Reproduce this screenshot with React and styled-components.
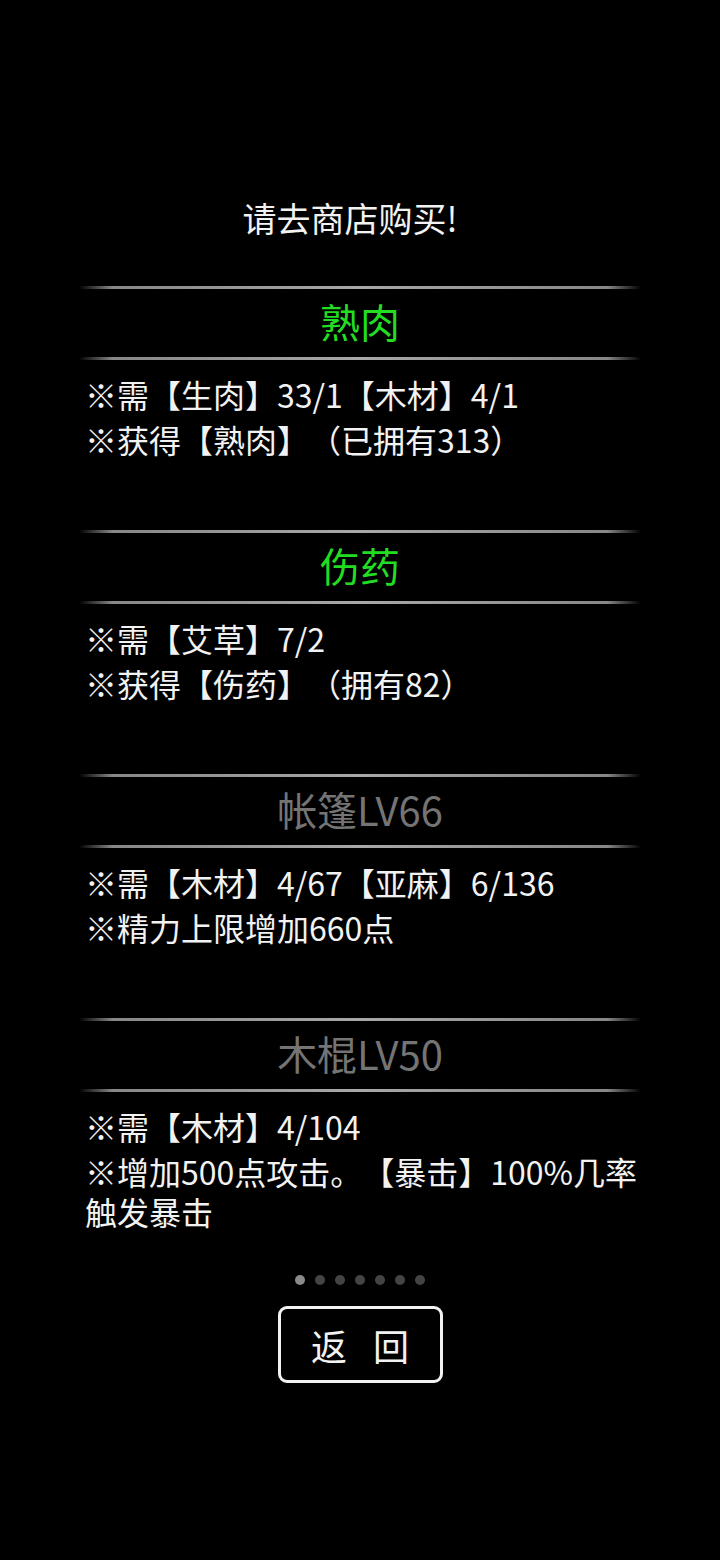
import styled, { createGlobalStyle } from 'styled-components';

const GlobalStyle = createGlobalStyle`
  html, body {
    margin: 0;
    padding: 0;
    background: #000;
  }
  body {
    font-family: "Noto Sans CJK SC", "Noto Sans", sans-serif;
    color: #f2f2f2;
    text-spacing-trim: space-all;
  }
`;

const Page = styled.div`
  width: 720px;
  min-height: 1560px;
  background: #000;
  display: flex;
  flex-direction: column;
  align-items: center;
  padding-top: 196px;
  box-sizing: border-box;
`;

const Notice = styled.div`
  font-size: 34px;
  line-height: 44px;
  color: #f2f2f2;
  margin-bottom: 46px;
  padding-right: 20px;
`;

const Panel = styled.div`
  width: 562px;
  display: flex;
  flex-direction: column;
`;

const Section = styled.section`
  display: flex;
  flex-direction: column;
  margin-bottom: ${(p) => (p.$last ? '0' : '71px')};
`;

const Divider = styled.div`
  height: 3px;
  background: linear-gradient(
    to right,
    rgba(150, 150, 150, 0) 0%,
    rgba(150, 150, 150, 0.9) 6%,
    #a8a8a8 50%,
    rgba(150, 150, 150, 0.9) 94%,
    rgba(150, 150, 150, 0) 100%
  );
`;

const Heading = styled.div`
  height: 68px;
  box-sizing: border-box;
  padding-bottom: 5px;
  display: flex;
  align-items: center;
  justify-content: center;
  font-size: 40px;
  color: ${(p) => (p.$active ? '#22dd22' : '#747474')};
`;

const Lines = styled.div`
  padding: 14px 0 0 6px;
  display: flex;
  flex-direction: column;
  gap: 5px;
`;

const Line = styled.p`
  margin: 0;
  font-size: 32px;
  line-height: 40px;
  color: #f2f2f2;
`;

const Dots = styled.div`
  display: flex;
  gap: 10px;
  margin-top: 44px;
`;

const Dot = styled.span`
  width: 10px;
  height: 10px;
  border-radius: 50%;
  background: ${(p) => (p.$on ? '#8a8a8a' : '#444')};
`;

const BackButton = styled.button`
  margin-top: 21px;
  width: 165px;
  height: 77px;
  box-sizing: border-box;
  border: 3px solid #f2f2f2;
  border-radius: 9px;
  background: #000;
  color: #f2f2f2;
  font-family: "Noto Sans CJK SC", "Noto Sans", sans-serif;
  font-size: 36px;
  letter-spacing: 26px;
  text-indent: 26px;
  display: flex;
  align-items: center;
  justify-content: center;
  padding: 0;
`;

const sections = [
  {
    title: '熟肉',
    active: true,
    lines: ['※需【生肉】33/1【木材】4/1', '※获得【熟肉】（已拥有313）'],
  },
  {
    title: '伤药',
    active: true,
    lines: ['※需【艾草】7/2', '※获得【伤药】（拥有82）'],
  },
  {
    title: '帐篷LV66',
    active: false,
    lines: ['※需【木材】4/67【亚麻】6/136', '※精力上限增加660点'],
  },
  {
    title: '木棍LV50',
    active: false,
    lines: ['※需【木材】4/104', '※增加500点攻击。【暴击】100%几率触发暴击'],
  },
];

export default function App() {
  return (
    <>
      <GlobalStyle />
      <Page>
        <Notice>请去商店购买!</Notice>
        <Panel>
          {sections.map((s, i) => (
            <Section key={s.title} $last={i === sections.length - 1}>
              <Divider />
              <Heading $active={s.active}>{s.title}</Heading>
              <Divider />
              <Lines>
                {s.lines.map((l) => (
                  <Line key={l}>{l}</Line>
                ))}
              </Lines>
            </Section>
          ))}
        </Panel>
        <Dots>
          {Array.from({ length: 7 }).map((_, i) => (
            <Dot key={i} $on={i === 0} />
          ))}
        </Dots>
        <BackButton>返回</BackButton>
      </Page>
    </>
  );
}
